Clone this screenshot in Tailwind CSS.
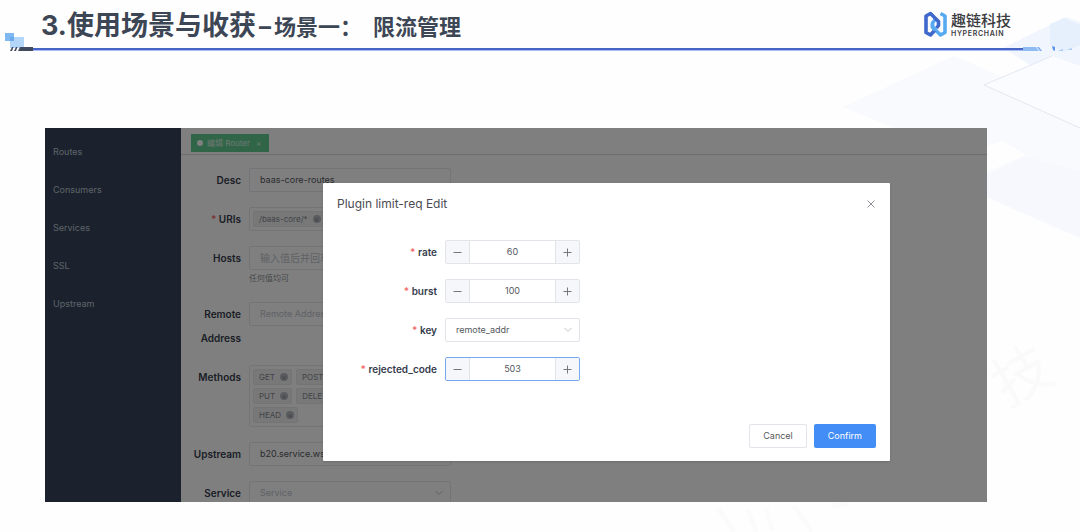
<!DOCTYPE html>
<html lang="zh-CN">
<head>
<meta charset="utf-8">
<meta name="viewport" content="width=device-width, initial-scale=1">
<title>限流管理</title>
<script src="https://cdn.jsdelivr.net/npm/@tailwindcss/browser@4"></script>
</head>
<body class="relative isolate flex h-screen flex-col overflow-hidden bg-[#fefefe] font-['Inter','Noto_Sans_CJK_SC',sans-serif] text-[9px] text-[#55575d]">

  <!-- Decorative planes -->
  <svg class="absolute top-0 right-0 -z-10" width="380" height="532" viewBox="700 0 380 532" aria-hidden="true">
    <path d="M843 107 L954 56 L1080 110 L1080 238 L987 197 L900 130Z" fill="#f9fafe"/>
    <path d="M1003 48 L1066 17 L1080 22 L1080 68 L1053 79Z" fill="#f1f5fd"/>
    <path d="M1050 24 L1064 18 L1080 25 L1080 45 L1064 52 L1050 45Z" fill="#e6f0fc"/>
    <path d="M984 85 L1052 56 L1080 66 L1080 127Z" fill="#fbfcff"/>
    <path d="M987 146 L1003 141 L1026 155 L987 172Z" fill="#fefefe"/>
    <path d="M987 175 L1026 156 L1080 172 L1080 238 L987 197Z" fill="#f6f8fe"/>
    <path d="M1052 56 L984 85 L1080 128" fill="none" stroke="#e3e7f1" stroke-width="1"/>
    <path d="M718 508 L734 532 M748 510 L756 532 M766 508 L772 530 M794 506 L812 532 M832 506 L848 504" fill="none" stroke="#fbfbfb" stroke-width="5"/>
    <text transform="translate(1007 408) rotate(-30)" fill="#fafafa" font-family="'Noto Sans CJK SC',sans-serif" font-size="58">技</text>
  </svg>

  <header class="relative flex h-[52px] shrink-0 items-start justify-between pr-[69px] pl-[41px]">
    <h1 class="flex items-baseline pt-[6px] text-[27px] leading-[40px] font-bold text-[#3d4654]">3.使用场景与收获<span class="mx-[3px] text-[24px]">–</span><span class="text-[22px] whitespace-pre">场景一：&#8197;&#8197;限流管理</span></h1>
    <div class="flex items-center gap-1 pt-[11px]">
      <svg width="23" height="26" viewBox="0 0 23 26" fill="none" stroke-width="3.6" stroke-linejoin="round" aria-hidden="true">
        <path d="M16.500 2.500 L21 5 V21.500 L16.500 24 L8.500 16 V12 L11.500 8" stroke="#58aaf0"/>
        <path d="M11 19 L6.500 24 L2 21.500 V5 L6.500 2.500 L14.500 10.500 V14.500 L12.500 17" stroke="#3f68cd"/>
        <path d="M8.500 12.500 V16 L12 19.500" stroke="#58aaf0"/>
      </svg>
      <div class="flex flex-col text-[#3a3b3f]">
        <span class="text-[15px] leading-[18px] font-medium">趣链科技</span>
        <span class="text-[7px] leading-[7px] font-semibold tracking-widest">HYPERCHAIN</span>
      </div>
    </div>
    <div class="absolute right-[56px] bottom-[1px] left-[33px] h-[3px] border-b border-[#a9bdf0] bg-[#4665c6]"></div>
    <svg class="absolute bottom-0 left-0" width="36" height="22" aria-hidden="true">
      <rect x="5" y="3" width="9" height="8" fill="#7fb9f3"/>
      <rect x="10" y="7" width="14" height="11" fill="#b3d5f8"/>
      <rect x="10" y="7" width="4" height="4" fill="#6aa9ec"/>
      <path d="M10 21 L12 17 H13.500 L12 21Z M14 21 L16 17 H17.500 L16 21Z M18 21 L20 17 H33 V21Z" fill="#414b60"/>
    </svg>
    <svg class="absolute right-0 bottom-0" width="57" height="6" aria-hidden="true">
      <path d="M0 1 H13 L16 5 H0Z" fill="#8fbdf2"/>
      <path d="M14 1 H16 L19 5 H17Z" fill="#79adee"/>
      <path d="M29 0 L32 1 V5 L30 4Z" fill="#5b93ea"/>
      <path d="M35 5 L40 3 V5Z M44 4 L49 2 V4Z" fill="#a9cdf7"/>
    </svg>
  </header>

  <div class="relative mt-[76px] mr-[93px] mb-[30px] ml-[45px] flex min-h-0 flex-1 overflow-hidden bg-white">
    <nav class="flex w-[136px] shrink-0 flex-col gap-[14px] bg-[#36445a] px-2 pt-3 leading-[24px] text-[#bcc5d1]">
      <a href="#">Routes</a>
      <a href="#">Consumers</a>
      <a href="#">Services</a>
      <a href="#">SSL</a>
      <a href="#">Upstream</a>
    </nav>

    <main class="min-w-0 flex-1">
      <div class="flex h-[27px] items-center border-b border-[#d8dce5] px-[10px] pt-1">
        <div class="flex h-[18px] items-center gap-1 bg-[#60cc8e] px-[6px] text-[8px] text-[#dcefe4]">
          <span class="size-[6px] rounded-full bg-white"></span>
          <span>编辑 Router</span>
          <button type="button" class="px-[2px]" aria-label="关闭标签">×</button>
        </div>
      </div>

      <form class="flex w-[270px] flex-col gap-[15px] pt-[13px] leading-[24px]">
        <div class="flex gap-2">
          <label for="desc" class="w-[60px] shrink-0 text-right text-[10px] font-semibold text-[#363c4c]">Desc</label>
          <input id="desc" value="baas-core-routes" class="h-6 w-full min-w-0 rounded-xs border border-[#e6e8ee] px-[10px]">
        </div>
        <div class="flex gap-2">
          <label for="uris" class="w-[60px] shrink-0 text-right text-[10px] font-semibold text-[#363c4c]"><span class="text-[#f56c6c]">*</span> URIs</label>
          <div class="flex h-6 w-full items-center rounded-xs border border-[#e6e8ee] px-[3px]">
            <span class="flex h-4 shrink-0 items-center gap-[5px] rounded-xs border border-[#e9e9eb] bg-[#f0f0f2] pr-[3px] pl-[5px] text-[8px] text-[#85888e]">/baas-core/*
              <button type="button" aria-label="移除" class="flex size-2 items-center justify-center rounded-full bg-[#b4b6bc] text-[8px] leading-none">×</button></span>
            <input id="uris" class="w-full min-w-0">
          </div>
        </div>
        <div class="flex gap-2">
          <label for="hosts" class="w-[60px] shrink-0 text-right text-[10px] font-semibold text-[#363c4c]">Hosts</label>
          <div class="w-full">
            <input id="hosts" placeholder="输入值后并回车" class="block h-6 w-full rounded-xs border border-[#e6e8ee] px-[10px] text-[10px] placeholder:text-[#c0c4cc]">
            <p class="text-[8px] leading-[17px] text-[#909399]">任何值均可</p>
          </div>
        </div>
        <div class="flex gap-2">
          <label for="remote" class="w-[60px] shrink-0 text-right text-[10px] font-semibold text-[#363c4c]">Remote Address</label>
          <input id="remote" placeholder="Remote Address" class="h-6 w-full min-w-0 rounded-xs border border-[#e6e8ee] px-[10px] placeholder:text-[#c0c4cc]">
        </div>
        <div class="flex gap-2">
          <span id="methods" class="w-[60px] shrink-0 text-right text-[10px] font-semibold text-[#363c4c]">Methods</span>
          <div role="group" aria-labelledby="methods" class="flex w-full flex-col gap-[3px] rounded-xs border border-[#e6e8ee] p-[3px] text-[8px] text-[#85888e]">
            <div class="flex gap-1">
              <span class="flex h-4 items-center gap-[5px] rounded-xs border border-[#e9e9eb] bg-[#f0f0f2] pr-[3px] pl-[5px]">GET
                <button type="button" aria-label="移除" class="flex size-2 items-center justify-center rounded-full bg-[#b4b6bc] text-[8px] leading-none">×</button></span>
              <span class="flex h-4 items-center gap-[5px] rounded-xs border border-[#e9e9eb] bg-[#f0f0f2] pr-[3px] pl-[5px]">POST
                <button type="button" aria-label="移除" class="flex size-2 items-center justify-center rounded-full bg-[#b4b6bc] text-[8px] leading-none">×</button></span>
            </div>
            <div class="flex gap-1">
              <span class="flex h-4 items-center gap-[5px] rounded-xs border border-[#e9e9eb] bg-[#f0f0f2] pr-[3px] pl-[5px]">PUT
                <button type="button" aria-label="移除" class="flex size-2 items-center justify-center rounded-full bg-[#b4b6bc] text-[8px] leading-none">×</button></span>
              <span class="flex h-4 items-center gap-[5px] rounded-xs border border-[#e9e9eb] bg-[#f0f0f2] pr-[3px] pl-[5px]">DELETE
                <button type="button" aria-label="移除" class="flex size-2 items-center justify-center rounded-full bg-[#b4b6bc] text-[8px] leading-none">×</button></span>
            </div>
            <div class="flex gap-1">
              <span class="flex h-4 items-center gap-[5px] rounded-xs border border-[#e9e9eb] bg-[#f0f0f2] pr-[3px] pl-[5px]">HEAD
                <button type="button" aria-label="移除" class="flex size-2 items-center justify-center rounded-full bg-[#b4b6bc] text-[8px] leading-none">×</button></span>
            </div>
          </div>
        </div>
        <div class="flex gap-2">
          <label for="upstream" class="w-[60px] shrink-0 text-right text-[10px] font-semibold text-[#363c4c]">Upstream</label>
          <input id="upstream" value="b20.service.ws" class="h-6 w-full min-w-0 rounded-xs border border-[#e6e8ee] px-[10px]">
        </div>
        <div class="flex gap-2">
          <label for="service" class="w-[60px] shrink-0 text-right text-[10px] font-semibold text-[#363c4c]">Service</label>
          <div class="relative w-full">
            <select id="service" class="block h-6 w-full appearance-none rounded-xs border border-[#e6e8ee] px-[10px] leading-[22px] text-[#c0c4cc]"><option>Service</option></select>
            <svg class="pointer-events-none absolute top-[9px] right-2" width="8" height="6" viewBox="0 0 8 6" fill="none" stroke="#c0c4cc" aria-hidden="true"><path d="M.5 1 L4 4.500 L7.500 1"/></svg>
          </div>
        </div>
      </form>
    </main>

    <div class="absolute inset-0 bg-black/50 pt-[55px] pr-[97px] pl-[278px]">
      <section role="dialog" aria-labelledby="dialog-title" class="flex flex-col rounded-[1px] bg-white px-[14px] pb-[13px] leading-[24px] shadow-sm">
        <div class="flex items-center justify-between pt-[9px]">
          <h2 id="dialog-title" class="text-[12px] text-[#4a4c52]">Plugin limit-req Edit</h2>
          <button type="button" aria-label="关闭" class="flex h-5 w-[10px] items-center justify-center"><svg width="8" height="8" viewBox="0 0 8 8" stroke="#909399" aria-hidden="true"><path d="M.5 .5 L7.500 7.500 M7.500 .5 L.5 7.500"/></svg></button>
        </div>
        <form class="flex w-[243px] flex-col gap-[15px] pt-6">
          <div class="flex gap-2">
            <label for="rate" class="w-[100px] shrink-0 text-right text-[10px] font-semibold text-[#363c4c]"><span class="text-[#f56c6c]">*</span> rate</label>
            <div class="flex h-6 w-full overflow-hidden rounded-xs border border-[#e2e4ea]">
              <button type="button" aria-label="减少" class="flex w-6 shrink-0 items-center justify-center border-r border-[#e2e4ea] bg-[#f5f7fa]"><svg width="9" height="9" stroke="#75777c"><path d="M0.500 4.500 H8.500"/></svg></button>
              <input id="rate" value="60" class="w-full min-w-0 text-center">
              <button type="button" aria-label="增加" class="flex w-6 shrink-0 items-center justify-center border-l border-[#e2e4ea] bg-[#f5f7fa]"><svg width="9" height="9" stroke="#75777c"><path d="M0.500 4.500 H8.500 M4.500 .5 V8.500"/></svg></button>
            </div>
          </div>
          <div class="flex gap-2">
            <label for="burst" class="w-[100px] shrink-0 text-right text-[10px] font-semibold text-[#363c4c]"><span class="text-[#f56c6c]">*</span> burst</label>
            <div class="flex h-6 w-full overflow-hidden rounded-xs border border-[#e2e4ea]">
              <button type="button" aria-label="减少" class="flex w-6 shrink-0 items-center justify-center border-r border-[#e2e4ea] bg-[#f5f7fa]"><svg width="9" height="9" stroke="#75777c"><path d="M0.500 4.500 H8.500"/></svg></button>
              <input id="burst" value="100" class="w-full min-w-0 text-center">
              <button type="button" aria-label="增加" class="flex w-6 shrink-0 items-center justify-center border-l border-[#e2e4ea] bg-[#f5f7fa]"><svg width="9" height="9" stroke="#75777c"><path d="M0.500 4.500 H8.500 M4.500 .5 V8.500"/></svg></button>
            </div>
          </div>
          <div class="flex gap-2">
            <label for="key" class="w-[100px] shrink-0 text-right text-[10px] font-semibold text-[#363c4c]"><span class="text-[#f56c6c]">*</span> key</label>
            <div class="relative w-full">
              <select id="key" class="block h-6 w-full appearance-none rounded-xs border border-[#e2e4ea] px-[10px] leading-[22px]"><option>remote_addr</option></select>
              <svg class="pointer-events-none absolute top-[9px] right-2" width="8" height="6" viewBox="0 0 8 6" fill="none" stroke="#c0c4cc" aria-hidden="true"><path d="M.5 1 L4 4.500 L7.500 1"/></svg>
            </div>
          </div>
          <div class="flex gap-2">
            <label for="code" class="w-[100px] shrink-0 text-right text-[10px] font-semibold text-[#363c4c]"><span class="text-[#f56c6c]">*</span> rejected_code</label>
            <div class="flex h-6 w-full overflow-hidden rounded-xs border border-[#74a9f2]">
              <button type="button" aria-label="减少" class="flex w-6 shrink-0 items-center justify-center border-r border-[#e2e4ea] bg-[#f5f7fa]"><svg width="9" height="9" stroke="#75777c"><path d="M0.500 4.500 H8.500"/></svg></button>
              <input id="code" value="503" class="w-full min-w-0 text-center">
              <button type="button" aria-label="增加" class="flex w-6 shrink-0 items-center justify-center border-l border-[#e2e4ea] bg-[#f5f7fa]"><svg width="9" height="9" stroke="#75777c"><path d="M0.500 4.500 H8.500 M4.500 .5 V8.500"/></svg></button>
            </div>
          </div>
        </form>
        <div class="flex justify-end gap-[7px] pt-[43px]">
          <button type="button" class="h-6 rounded-xs border border-[#e2e4ea] px-[13px] leading-[22px]">Cancel</button>
          <button type="button" class="h-6 rounded-xs bg-[#438df7] px-[14px] text-white">Confirm</button>
        </div>
      </section>
    </div>
  </div>
</body>
</html>
